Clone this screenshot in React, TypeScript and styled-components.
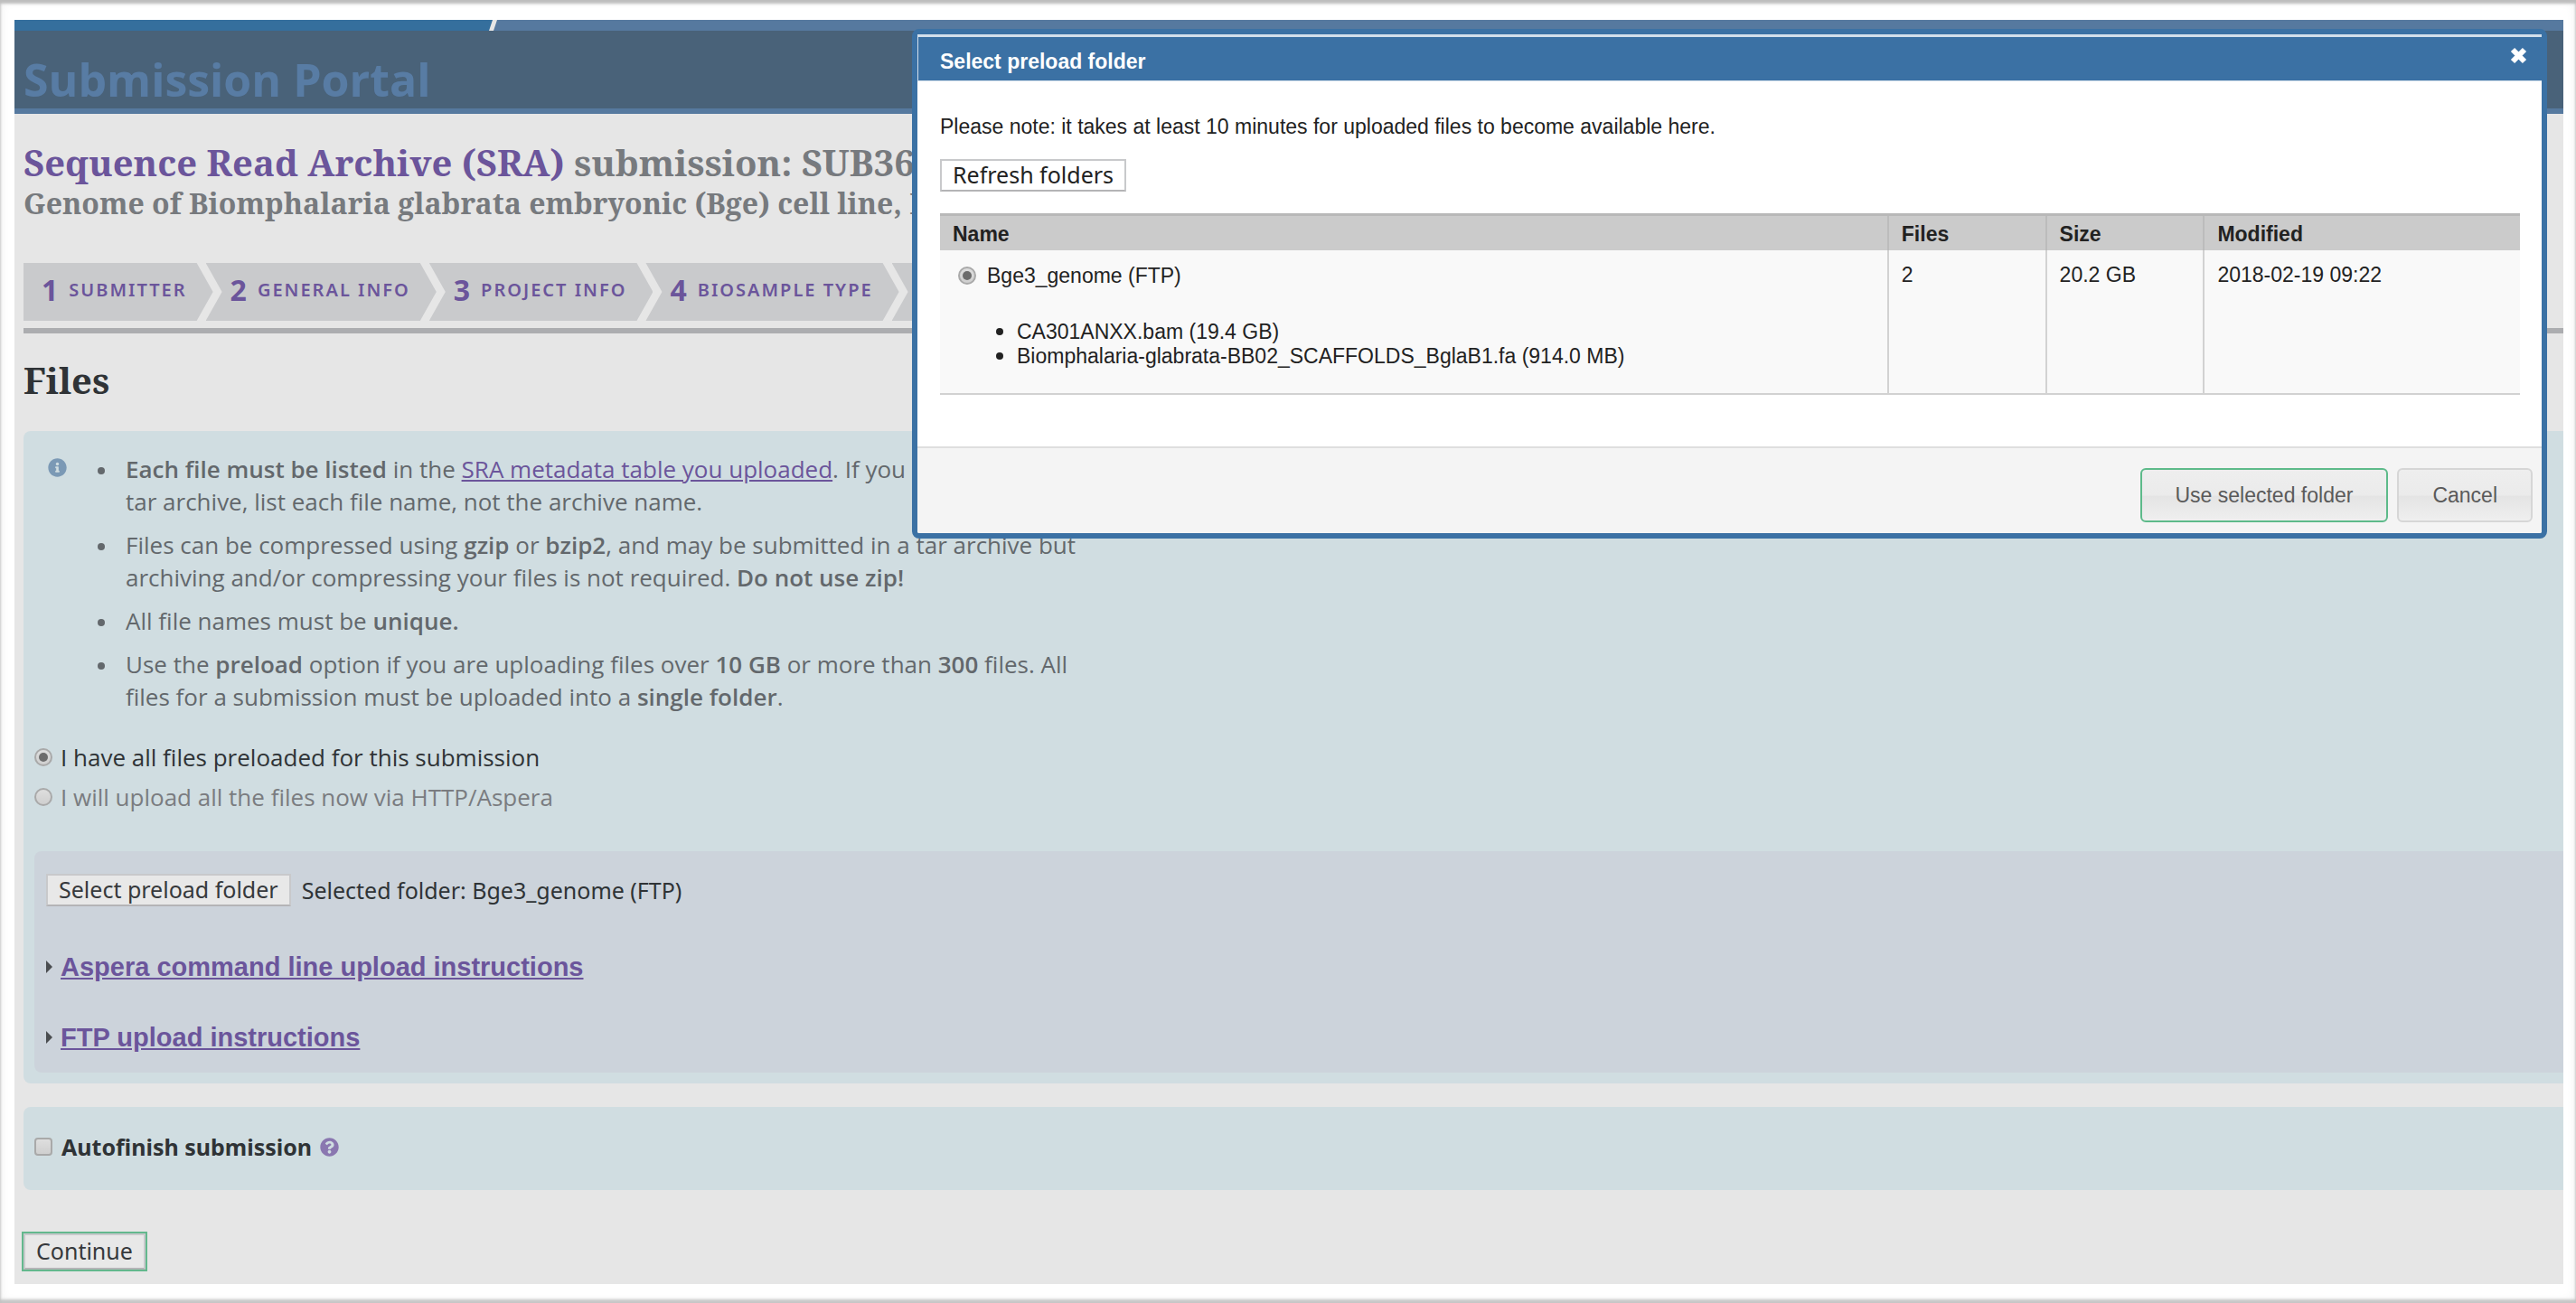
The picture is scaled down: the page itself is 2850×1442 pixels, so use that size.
import React, { useState } from "react";
import styled, { createGlobalStyle, css } from "styled-components";
import { FaInfoCircle, FaQuestionCircle } from "react-icons/fa";

const SANS = '"Open Sans", "Noto Sans", sans-serif';
const CONTROL = '"Noto Sans", "Open Sans", sans-serif';
const SERIF = '"Noto Serif", "DejaVu Serif", serif';
const ARIAL = '"Liberation Sans", Arial, sans-serif';
const PURPLE = "#6b559b";

const GlobalStyle = createGlobalStyle`
  *, *::before, *::after { box-sizing: border-box; }
  html, body, #root { height: 100%; }
  body {
    margin: 0;
    background: #fff;
    color: #2f3336;
    font: 26px/36px ${SANS};
  }
`;

const Frame = styled.div`
  position: relative;
  display: flex;
  flex-direction: column;
  min-height: 100%;
  padding: 22px 14px 21px 16px;
  overflow: hidden;
  box-shadow: inset 0 4px 3px #bdbdbd, inset 0 -4px 3px #c6c6c6, inset 0 0 12px #ececec;
`;

const TopBar = styled.div`
  display: flex;
  height: 12px;
  background: #56799f;
`;

const TopBarHome = styled.div`
  width: 520px;
  background: #356f9d;
`;

const TopBarSlash = styled.svg`
  display: block;
  margin-left: -10px;
`;

const SiteHeader = styled.header`
  height: 92px;
  padding: 22px 10px 0;
  background: #496279;
  border-bottom: 6px solid #56799f;
`;

const SiteTitle = styled.div`
  color: #587ca4;
  font-size: 50px;
  font-weight: 700;
  line-height: 64px;
`;

const Main = styled.main`
  flex: 1;
  padding: 30px 0 8px 10px;
  background: #e6e6e6;
`;

const PageTitle = styled.h1`
  margin: 0;
  color: #777a7e;
  font: 700 40px/48px ${SERIF};
`;

const PageSubtitle = styled.h2`
  margin: 0 0 45px;
  color: #777a7e;
  font: 700 32px/42px ${SERIF};
`;

const TitleLink = styled.a`
  color: ${PURPLE};
  text-decoration: none;
`;

const Steps = styled.ol`
  display: flex;
  margin: 0;
  padding: 0 0 8px;
  list-style: none;
  border-bottom: 6px solid #acadb0;
`;

const StepItem = styled.li<{ $first?: boolean }>`
  display: flex;
  min-width: 80px;
  height: 64px;
  padding: 0 29px 4px ${(p) => (p.$first ? "20px" : "27px")};
  margin-left: ${(p) => (p.$first ? "0" : "-8px")};
  background: #c9cacc;
  clip-path: ${(p) =>
    p.$first
      ? "polygon(0 0, calc(100% - 18px) 0, 100% 50%, calc(100% - 18px) 100%, 0 100%)"
      : "polygon(0 0, calc(100% - 18px) 0, 100% 50%, calc(100% - 18px) 100%, 0 100%, 18px 50%)"};
`;

const StepLink = styled.a`
  display: flex;
  align-items: center;
  gap: 12px;
  color: ${PURPLE};
  font: 600 20px/36px ${CONTROL};
  letter-spacing: 2px;
  text-decoration: none;
  text-transform: uppercase;
  white-space: nowrap;
`;

const StepNumber = styled.span`
  font-size: 32px;
  font-weight: 700;
  letter-spacing: 0;
`;

const SectionTitle = styled.h2`
  margin: 27px 0 31px;
  font: 700 40px/50px ${SERIF};
`;

const Panel = styled.section`
  margin-bottom: 26px;
  padding: 24px 0 12px 12px;
  background: #d0dde1;
  border-radius: 8px 0 0 8px;
`;

const Notes = styled.div`
  display: flex;
  align-items: flex-start;
  gap: 27px;
  padding-left: 15px;
  margin-bottom: 27px;
  color: #63686c;
`;

const InfoIcon = styled(FaInfoCircle)`
  flex: none;
  width: 21px;
  height: 21px;
  margin-top: 6px;
  color: #7b99b5;
`;

const NoteList = styled.ul`
  display: flex;
  flex-direction: column;
  gap: 12px;
  max-width: 1120px;
  margin: 0;
  padding: 0;
  list-style: none;
`;

const NoteItem = styled.li`
  display: flex;
  gap: 23px;
  padding-left: 7px;

  b {
    font-weight: 600;
  }

  &::before {
    content: "";
    flex: none;
    width: 8px;
    height: 8px;
    margin-top: 16px;
    border-radius: 50%;
    background: currentColor;
  }
`;

const TextLink = styled.a`
  color: ${PURPLE};
`;

const markBox = css`
  appearance: none;
  flex: none;
  width: 20px;
  height: 20px;
  margin: 0;
  border: 2px solid #a9a9a9;
  background: linear-gradient(#dedede, #cfcfcf);
`;

const Radio = styled.input`
  ${markBox}
  display: grid;
  place-items: center;
  border-radius: 50%;

  &:checked::before {
    content: "";
    width: 10px;
    height: 10px;
    border-radius: 50%;
    background: #6c6c6c;
  }
`;

const Checkbox = styled.input`
  ${markBox}
  border-radius: 4px;
`;

const Choice = styled.label<{ $muted?: boolean }>`
  display: flex;
  align-items: center;
  gap: 9px;
  height: 44px;
  color: ${(p) => (p.$muted ? "#7a7c80" : "#2f3336")};
`;

const Preload = styled.div`
  margin-top: 38px;
  padding: 25px 13px 22px;
  background: #ccd3db;
  border-radius: 8px 0 0 8px;
`;

const PreloadRow = styled.div`
  display: flex;
  align-items: center;
  gap: 12px;
  font: 25px/36px ${CONTROL};
`;

const PlainButton = styled.button<{ $white?: boolean; $green?: boolean }>`
  display: block;
  height: ${(p) => (p.$green ? "40px" : "36px")};
  padding: 0 12px 2px;
  border: 2px solid #c8c9cb;
  border-bottom-color: #b4b4b6;
  background: ${(p) => (p.$white ? "#fff" : "#e8e8e8")};
  box-shadow: ${(p) => (p.$green ? "0 0 0 2px #63b88d" : "none")};
  color: ${(p) => (p.$white ? "#222" : "#36393c")};
  font: 25px/30px ${CONTROL};
`;

const Instruction = styled.h3`
  display: flex;
  align-items: center;
  gap: 9px;
  margin: 50px 0 0;
  font: 700 29px/34px ${ARIAL};

  & + & {
    margin-top: 44px;
  }
`;

const Arrow = styled.svg`
  display: block;
  fill: #4a4d50;
`;

const Autofinish = styled(Panel)`
  display: flex;
  align-items: center;
  gap: 9px;
  margin-bottom: 48px;
  padding-top: 26px;
  padding-bottom: 30px;
`;

const AutofinishLabel = styled.label`
  display: flex;
  align-items: center;
  gap: 10px;
  font: 700 25px/36px ${CONTROL};
`;

const HelpIcon = styled(FaQuestionCircle)`
  display: block;
  width: 21px;
  height: 21px;
  color: #8a77b0;
`;

/* ---- preload folder dialog ---- */

const Dialog = styled.section`
  position: absolute;
  top: 32px;
  left: 1009px;
  right: 32px;
  border: 6px solid #3b71a4;
  border-radius: 8px;
  background: #fff;
  color: #222;
  font: 23px/26px ${ARIAL};
`;

const DialogHeader = styled.header`
  display: flex;
  align-items: center;
  justify-content: space-between;
  height: 52px;
  padding: 6px 16px 0 24px;
  border: 1px solid #d3dfeb;
  border-top-width: 3px;
  border-right: 0;
  background: #3b71a4;
  color: #fff;
`;

const DialogTitle = styled.h2`
  margin: 0;
  font: 700 23px/26px ${ARIAL};
`;

const CloseButton = styled.button`
  align-self: flex-start;
  display: grid;
  place-items: center;
  width: 19px;
  height: 19px;
  margin-top: 5px;
  padding: 0;
  border: 0;
  background: none;
`;

const DialogBody = styled.div`
  padding: 37px 24px 57px 25px;
`;

const DialogNote = styled.p`
  margin: 0 0 23px;
`;

const FolderTable = styled.table`
  width: 100%;
  margin-top: 24px;
  border-collapse: collapse;
  table-layout: fixed;
  border-top: 3px solid #b8b8b8;
  border-bottom: 2px solid #d2d2d2;
`;

const Th = styled.th<{ $width?: string }>`
  width: ${(p) => p.$width || "auto"};
  height: 39px;
  padding: 2px 14px 0;
  background: #cbcbcb;
  text-align: left;
  vertical-align: middle;

  & + & {
    border-left: 2px solid #bcbcbc;
  }
`;

const Td = styled.td`
  height: 159px;
  padding: 14px 14px 0;
  background: #f9f9f9;
  vertical-align: top;

  & + & {
    border-left: 2px solid #d2d2d2;
  }
`;

const FolderChoice = styled.label`
  display: flex;
  align-items: center;
  gap: 12px;
  padding: 1px 0 0 6px;
`;

const FileList = styled.ul`
  margin: 35px 0 0;
  padding: 0 0 0 71px;

  li::marker {
    font-size: 26px;
  }
`;

const DialogFooter = styled.footer`
  display: flex;
  justify-content: flex-end;
  gap: 10px;
  padding: 22px 10px 12px;
  border-top: 2px solid #dedede;
  border-radius: 0 0 2px 2px;
  background: #f4f4f4;
`;

const DialogButton = styled.button<{ $primary?: boolean }>`
  height: 60px;
  padding: 0 37px;
  border: 2px solid ${(p) => (p.$primary ? "#5dba8a" : "#d6d6d6")};
  border-radius: 6px;
  background: linear-gradient(#eee 0%, #ebebeb 50%, #e4e4e4 52%, #efefef 100%);
  color: #5a5a5a;
  font: 23px/26px ${ARIAL};
`;

const steps = ["Submitter", "General info", "Project info", "BioSample type", ""];

const instructions = ["Aspera command line upload instructions", "FTP upload instructions"];

const folder = {
  name: "Bge3_genome (FTP)",
  count: "2",
  size: "20.2 GB",
  modified: "2018-02-19 09:22",
  files: ["CA301ANXX.bam (19.4 GB)", "Biomphalaria-glabrata-BB02_SCAFFOLDS_BglaB1.fa (914.0 MB)"],
};

function StepBar() {
  return (
    <Steps>
      {steps.map((label, i) => (
        <StepItem key={i} $first={i === 0}>
          {label && (
            <StepLink href="#">
              <StepNumber>{i + 1}</StepNumber>
              <span>{label}</span>
            </StepLink>
          )}
        </StepItem>
      ))}
    </Steps>
  );
}

function PreloadDialog() {
  return (
    <Dialog role="dialog" aria-labelledby="preload-title">
      <DialogHeader>
        <DialogTitle id="preload-title">Select preload folder</DialogTitle>
        <CloseButton type="button" aria-label="Close">
          <svg width="19" height="19" viewBox="0 0 19 19" aria-hidden="true">
            <path d="M3 3L16 16M16 3L3 16" stroke="#fff" strokeWidth="6" />
          </svg>
        </CloseButton>
      </DialogHeader>
      <DialogBody>
        <DialogNote>
          Please note: it takes at least 10 minutes for uploaded files to become available here.
        </DialogNote>
        <PlainButton type="button" $white>
          Refresh folders
        </PlainButton>
        <FolderTable>
          <thead>
            <tr>
              <Th>Name</Th>
              <Th $width="10%">Files</Th>
              <Th $width="10%">Size</Th>
              <Th $width="20%">Modified</Th>
            </tr>
          </thead>
          <tbody>
            <tr>
              <Td>
                <FolderChoice>
                  <Radio type="radio" name="folder" defaultChecked />
                  {folder.name}
                </FolderChoice>
                <FileList>
                  {folder.files.map((file) => (
                    <li key={file}>{file}</li>
                  ))}
                </FileList>
              </Td>
              <Td>{folder.count}</Td>
              <Td>{folder.size}</Td>
              <Td>{folder.modified}</Td>
            </tr>
          </tbody>
        </FolderTable>
      </DialogBody>
      <DialogFooter>
        <DialogButton type="button" $primary>
          Use selected folder
        </DialogButton>
        <DialogButton type="button">Cancel</DialogButton>
      </DialogFooter>
    </Dialog>
  );
}

export default function App() {
  const [preloaded, setPreloaded] = useState(true);

  return (
    <>
      <GlobalStyle />
      <Frame>
        <TopBar>
          <TopBarHome />
          <TopBarSlash width="24" height="12" viewBox="0 0 24 12" aria-hidden="true">
            <path d="M0 0H20L16 12H0Z" fill="#356f9d" />
            <path d="M19 0H24L20 12H15Z" fill="#e6e6e6" />
          </TopBarSlash>
        </TopBar>
        <SiteHeader>
          <SiteTitle>Submission Portal</SiteTitle>
        </SiteHeader>
        <Main>
          <PageTitle>
            <TitleLink href="#">Sequence Read Archive (SRA)</TitleLink> submission: SUB36
          </PageTitle>
          <PageSubtitle>Genome of Biomphalaria glabrata embryonic (Bge) cell line, B</PageSubtitle>
          <StepBar />
          <SectionTitle>Files</SectionTitle>
          <Panel>
            <Notes>
              <InfoIcon aria-hidden="true" />
              <NoteList>
                <NoteItem>
                  <div>
                    <b>Each file must be listed</b> in the{" "}
                    <TextLink href="#">SRA metadata table you uploaded</TextLink>. If you a
                    <br />
                    tar archive, list each file name, not the archive name.
                  </div>
                </NoteItem>
                <NoteItem>
                  <div>
                    Files can be compressed using <b>gzip</b> or <b>bzip2</b>, and may be submitted in a tar
                    archive but
                    <br />
                    archiving and/or compressing your files is not required. <b>Do not use zip!</b>
                  </div>
                </NoteItem>
                <NoteItem>
                  <div>
                    All file names must be <b>unique.</b>
                  </div>
                </NoteItem>
                <NoteItem>
                  <div>
                    Use the <b>preload</b> option if you are uploading files over <b>10 GB</b> or more than{" "}
                    <b>300</b> files. All
                    <br />
                    files for a submission must be uploaded into a <b>single folder</b>.
                  </div>
                </NoteItem>
              </NoteList>
            </Notes>
            <Choice>
              <Radio type="radio" name="source" checked={preloaded} onChange={() => setPreloaded(true)} />
              I have all files preloaded for this submission
            </Choice>
            <Choice $muted>
              <Radio type="radio" name="source" checked={!preloaded} onChange={() => setPreloaded(false)} />
              I will upload all the files now via HTTP/Aspera
            </Choice>
            <Preload>
              <PreloadRow>
                <PlainButton type="button">Select preload folder</PlainButton>
                <span>Selected folder: {folder.name}</span>
              </PreloadRow>
              {instructions.map((title) => (
                <Instruction key={title}>
                  <Arrow width="7" height="14" viewBox="0 0 7 14" aria-hidden="true">
                    <path d="M0 0L7 7L0 14Z" />
                  </Arrow>
                  <TextLink href="#">{title}</TextLink>
                </Instruction>
              ))}
            </Preload>
          </Panel>
          <Autofinish>
            <AutofinishLabel>
              <Checkbox type="checkbox" />
              Autofinish submission
            </AutofinishLabel>
            <HelpIcon aria-hidden="true" />
          </Autofinish>
          <PlainButton type="button" $green>
            Continue
          </PlainButton>
        </Main>
        <PreloadDialog />
      </Frame>
    </>
  );
}
